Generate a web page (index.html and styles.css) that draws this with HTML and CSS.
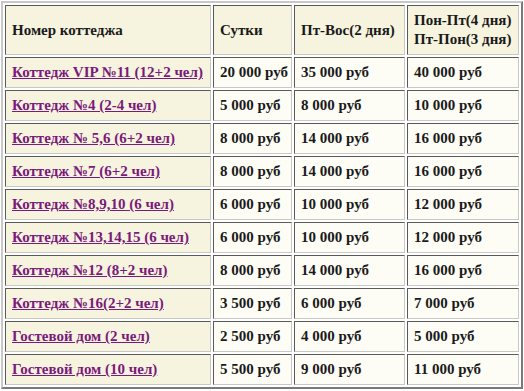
FILE: index.html
```html
<!DOCTYPE html>
<html>
    <head>
        <title>Цены</title>
        <link rel="stylesheet" href="styles.css">
    </head>
    <body>
        <table class="prices">
            <colgroup>
                <col class="prices__col-name">
                <col class="prices__col-day">
                <col class="prices__col-weekend">
                <col class="prices__col-week">
            </colgroup>
            <tr class="prices__head">
                <th>Номер коттеджа</th>
                <th>Сутки</th>
                <th>Пт-Вос(2 дня)</th>
                <th>Пон-Пт(4 дня)<br>Пт-Пон(3 дня)</th>
            </tr>
            <tr>
                <th><a href="#">Коттедж VIP №11 (12+2 чел)</a></th>
                <td>20 000 руб</td>
                <td>35 000 руб</td>
                <td>40 000 руб</td>
            </tr>
            <tr>
                <th><a href="#">Коттедж №4 (2-4 чел)</a></th>
                <td>5 000 руб</td>
                <td>8 000 руб</td>
                <td>10 000 руб</td>
            </tr>
            <tr>
                <th><a href="#">Коттедж № 5,6 (6+2 чел)</a></th>
                <td>8 000 руб</td>
                <td>14 000 руб</td>
                <td>16 000 руб</td>
            </tr>
            <tr>
                <th><a href="#">Коттедж №7 (6+2 чел)</a></th>
                <td>8 000 руб</td>
                <td>14 000 руб</td>
                <td>16 000 руб</td>
            </tr>
            <tr>
                <th><a href="#">Коттедж №8,9,10 (6 чел)</a></th>
                <td>6 000 руб</td>
                <td>10 000 руб</td>
                <td>12 000 руб</td>
            </tr>
            <tr>
                <th><a href="#">Коттедж №13,14,15 (6 чел)</a></th>
                <td>6 000 руб</td>
                <td>10 000 руб</td>
                <td>12 000 руб</td>
            </tr>
            <tr>
                <th><a href="#">Коттедж №12 (8+2 чел)</a></th>
                <td>8 000 руб</td>
                <td>14 000 руб</td>
                <td>16 000 руб</td>
            </tr>
            <tr>
                <th><a href="#">Коттедж №16(2+2 чел)</a></th>
                <td>3 500 руб</td>
                <td>6 000 руб</td>
                <td>7 000 руб</td>
            </tr>
            <tr>
                <th><a href="#">Гостевой дом (2 чел)</a></th>
                <td>2 500 руб</td>
                <td>4 000 руб</td>
                <td>5 000 руб</td>
            </tr>
            <tr>
                <th><a href="#">Гостевой дом (10 чел)</a></th>
                <td>5 500 руб</td>
                <td>9 000 руб</td>
                <td>11 000 руб</td>
            </tr>
        </table>
    </body>
</html>
```

FILE: styles.css
```css
* {
  box-sizing: border-box;
}

body {
  margin: 1px;
  font-family: "Liberation Serif", serif;
  background-color: #fff;
  color: #1a1a1a;
}

.prices {
  width: 522px;
  table-layout: fixed;
  border-collapse: separate;
  border-spacing: 2px;
  border: 2px solid;
  border-color: #c8c8c8 #7a7a7a #7a7a7a #c8c8c8;
  font-size: 15px;
  font-weight: bold;
}

.prices__col-name {
  width: 206px;
}

.prices__col-day {
  width: 79px;
}

.prices__col-weekend {
  width: 111px;
}

.prices__col-week {
  width: 112px;
}

.prices th,
.prices td {
  height: 31px;
  padding: 0 6px;
  text-align: left;
  vertical-align: middle;
  border: 1px solid;
  border-color: #5a5a5a #c8c8c8 #c8c8c8 #5a5a5a;
  background-color: #fdfcf5;
  line-height: 19px;
  white-space: nowrap;
}

.prices th {
  background-color: #f6f3df;
}

.prices__head th {
  height: 50px;
}

.prices a {
  color: #7a1a7a;
  text-decoration: underline;
}
```
